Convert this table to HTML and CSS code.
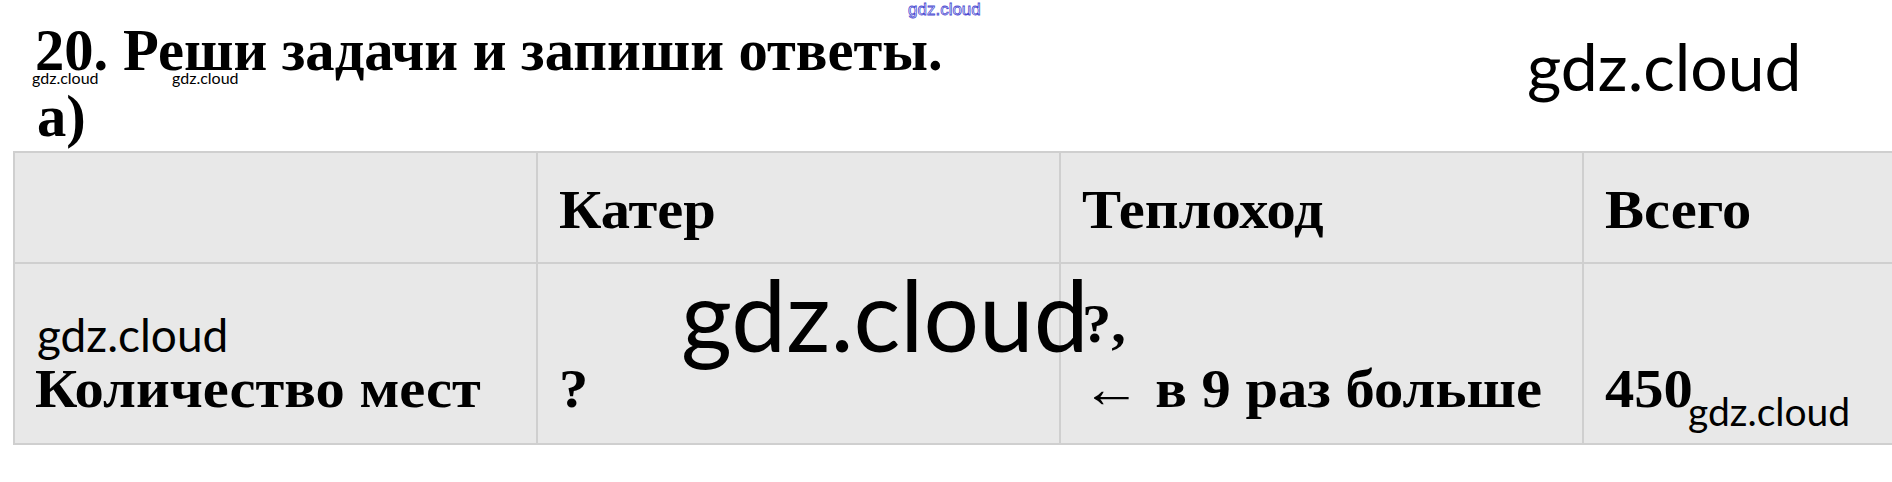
FILE: index.html
```html
<!DOCTYPE html>
<html lang="ru">
  <head>
    <meta charset="UTF-8" />
    <meta name="viewport" content="width=device-width, initial-scale=1.0" />
    <title>Задание 20</title>

    <link rel="stylesheet" href="styles.css">
  </head>
  <body>
    <div class="page">
      <span class="wm wm-top">gdz.cloud</span>
      <span class="wm wm-big">gdz.cloud</span>
      <span class="wm wm-small wm-small-1">gdz.cloud</span>
      <span class="wm wm-small wm-small-2">gdz.cloud</span>

      <h1 class="task">20. Реши задачи и запиши ответы.</h1>
      <h2 class="part">а)</h2>

      <div class="grid">
        <div class="cell head"></div>
        <div class="cell head"><p>Катер</p></div>
        <div class="cell head"><p>Теплоход</p></div>
        <div class="cell head"><p>Всего</p></div>

        <div class="cell row first">
          <span class="mark">gdz.cloud</span>
          <p>Количество мест</p>
        </div>
        <div class="cell row">
          <p>?</p>
          <span class="wm wm-mid">gdz.cloud</span>
        </div>
        <div class="cell row">
          <p>?,</p>
          <p>← в 9 раз больше</p>
        </div>
        <div class="cell row">
          <p>450</p>
          <span class="wm wm-sub">gdz.cloud</span>
        </div>
      </div>
    </div>
  </body>
</html>
```

FILE: styles.css
```css
* {
  margin: 0;
  padding: 0;
  box-sizing: border-box;
}

html,
body {
  overflow: hidden;
}

body {
  background-color: #fff;
  color: #000;
  font-family: "Liberation Serif", "Times New Roman", serif;
}

.page {
  position: relative;
  padding-top: 18px;
}

.task,
.part {
  font-size: 58.6px;
  font-weight: bold;
  line-height: 66px;
  padding-left: 35px;
}

.part {
  padding-left: 37px;
}

.grid {
  display: grid;
  grid-template-columns: repeat(4, 523px);
  grid-template-rows: 111px 181px;
  margin-top: 1px;
  margin-left: 13px;
  width: max-content;
  border-top: 2px solid #cfcfcf;
  border-left: 2px solid #cfcfcf;
  background-color: #e8e8e8;
}

.cell {
  position: relative;
  border-right: 2px solid #cfcfcf;
  border-bottom: 2px solid #cfcfcf;
  padding-left: 21px;
  font-size: 54px;
  font-weight: bold;
  line-height: 65px;
}

/* the scan's serif type runs a bit wider than Times at the same height */
.cell p {
  transform: scaleX(1.085);
  transform-origin: left center;
  white-space: nowrap;
}

.head {
  padding-top: 25px;
}

.row {
  display: flex;
  flex-direction: column;
  justify-content: flex-end;
  padding-bottom: 21px;
}

.first {
  padding-left: 20px;
}

.mark {
  display: block;
  font-family: Lato, "Open Sans", sans-serif;
  font-weight: normal;
  font-size: 46px;
  line-height: 45px;
  padding-left: 2px;
}

/* watermarks lying over the page */
.wm {
  position: absolute;
  font-family: Lato, "Open Sans", sans-serif;
  font-weight: normal;
  line-height: 1;
  white-space: nowrap;
  color: #000;
}

.wm-top {
  top: 1px;
  left: 908px;
  font-family: "Liberation Sans", Arial, sans-serif;
  font-size: 17px;
  color: #fff;
  -webkit-text-stroke: 0.8px #4a4ad2;
}

.wm-big {
  top: 33px;
  left: 1527px;
  font-size: 66px;
}

.wm-small {
  top: 70px;
  font-size: 16px;
}

.wm-small-1 {
  left: 32px;
}

.wm-small-2 {
  left: 172px;
}

.wm-mid {
  top: 1px;
  left: 143px;
  font-size: 98px;
}

.wm-sub {
  top: 128px;
  left: 104px;
  font-size: 39px;
}
```
